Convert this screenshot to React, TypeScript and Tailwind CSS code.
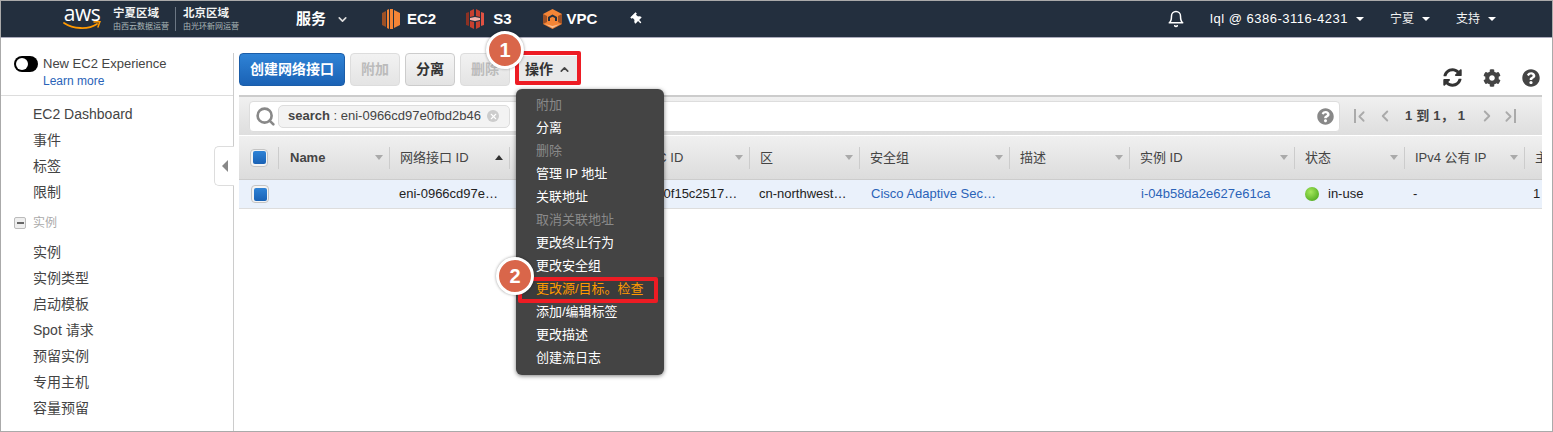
import { FaCog, FaQuestionCircle, FaSyncAlt, FaThumbtack } from "react-icons/fa";
import { FiBell } from "react-icons/fi";
import { ChevronDown, ChevronUp, ChevronLeft, ChevronRight, Search, X } from "lucide-react";

const font = "[font-family:'Liberation_Sans','Noto_Sans_CJK_SC',sans-serif]";

const columns = [
  { label: "Name", width: "w-[111px]", arrow: true, bold: true },
  { label: "网络接口 ID", width: "w-[120px]", arrow: false, up: true },
  { label: "", width: "w-[120px]", arrow: false },
  { label: "VPC ID", width: "w-[120px]", arrow: true },
  { label: "区", width: "w-[110px]", arrow: true },
  { label: "安全组", width: "w-[150px]", arrow: true },
  { label: "描述", width: "w-[120px]", arrow: true },
  { label: "实例 ID", width: "w-[165px]", arrow: true },
  { label: "状态", width: "w-[110px]", arrow: true },
  { label: "IPv4 公有 IP", width: "w-[120px]", arrow: true },
  { label: "主", width: "w-[60px]", arrow: false },
];

const menuItems = [
  { label: "附加", disabled: true },
  { label: "分离" },
  { label: "删除", disabled: true },
  { label: "管理 IP 地址" },
  { label: "关联地址" },
  { label: "取消关联地址", disabled: true },
  { label: "更改终止行为" },
  { label: "更改安全组" },
  { label: "更改源/目标。检查", active: true },
  { label: "添加/编辑标签" },
  { label: "更改描述" },
  { label: "创建流日志" },
];

const Caret = () => (
  <span className="inline-block w-0 h-0 border-x-[4px] border-x-transparent border-t-[4px] border-t-white" />
);

const SortArrow = ({ up }: { up?: boolean }) =>
  up ? (
    <span className="w-0 h-0 border-x-[4px] border-x-transparent border-b-[5px] border-b-[#333]" />
  ) : (
    <span className="w-0 h-0 border-x-[4px] border-x-transparent border-t-[5px] border-t-[#aaa]" />
  );

const CheckBox = () => (
  <span className="flex items-center justify-center w-[18px] h-[18px] rounded-[4px] border border-[#c4c4c4] bg-[#f4f4f4]">
    <span className="w-[13px] h-[13px] rounded-[2px] bg-gradient-to-b from-[#2f83d6] to-[#1a62b5]" />
  </span>
);

const Ec2Icon = () => (
  <svg width="18" height="20" viewBox="0 0 18 20">
    <path d="M0 4l4-2v16l-4-2z" fill="#9d5025" />
    <path d="M5 1l2-1v20l-2-1zM8 0h3v20H8zM12 1l6 3v12l-6 3z" fill="#f58536" />
  </svg>
);

const S3Icon = () => (
  <svg width="18" height="20" viewBox="0 0 18 20">
    <path d="M0 4l3-1v14l-3-1z" fill="#8c3123" />
    <path d="M4 2l4-2v7l-4 1zM4 12l4 1v7l-4-2zM10 0l4 2v6l-4-1zM10 13l4-1v6l-4 2z" fill="#c7402f" />
    <path d="M15 3l3 1v12l-3 1z" fill="#e05243" />
    <path d="M4 9l5-1 5 1v2l-5 1-5-1z" fill="#f2b0a9" />
  </svg>
);

const VpcIcon = () => (
  <svg width="19" height="20" viewBox="0 0 19 20">
    <path d="M0 5l9.5-5L19 5v10l-9.5 5L0 15z" fill="#f58536" />
    <path d="M0 5l4 2v6l-4 2zM19 5l-4 2v6l4 2z" fill="#9d5025" />
    <path d="M5 12V8l4.5-2.5L14 8v4h-2V9l-2.500-1.300L7 9v3z" fill="#232f3e" />
    <path d="M2 15l7.500 2 7.500-2-7.500 4z" fill="#fbbf93" />
  </svg>
);

const AwsLogo = () => (
  <div className="flex flex-col items-center w-[38px] h-[30px]">
    <span className="text-[21px] leading-[18px] text-white [font-family:'Open_Sans','Liberation_Sans',sans-serif] tracking-[-0.5px]">
      aws
    </span>
    <svg width="38" height="9" viewBox="0 0 38 9" className="-mt-[1px]">
      <path d="M1 2c9 6 24 7 33 1" fill="none" stroke="#f90" strokeWidth="1.800" strokeLinecap="round" />
      <path d="M31 1l6-.500-2 5.500" fill="none" stroke="#f90" strokeWidth="1.500" strokeLinecap="round" />
    </svg>
  </div>
);

const Region = ({ title, sub }: { title: string; sub: string }) => (
  <div className="flex flex-col leading-none pt-px">
    <span className="text-[11.500px] leading-[13px] font-bold text-[#f2f3f3]">{title}</span>
    <span className="text-[8px] leading-[12px] text-[#aab7b8] mt-[1px]">{sub}</span>
  </div>
);

const Btn = ({ label, disabled, className }: { label: string; disabled?: boolean; className?: string }) => (
  <button
    className={`flex items-center justify-center w-[50px] h-[33px] rounded-[4px] border text-[14px] font-bold bg-gradient-to-b ${
      disabled
        ? "border-[#ddd] from-[#f2f2f2] to-[#e4e4e4] text-[#bbb]"
        : "border-[#ccc] from-[#f6f6f6] to-[#e3e3e3] text-[#333]"
    } ${className ?? ""}`}
  >
    {label}
  </button>
);

const Header = () => (
  <header className="flex items-center h-[37px] bg-[#232f3e] border-b border-[#aab] pl-[62px] text-white shrink-0">
    <AwsLogo />
    <div className="ml-[12px]">
      <Region title="宁夏区域" sub="由西云数据运营" />
    </div>
    <span className="w-px h-[24px] bg-[#6b7683] ml-[6px] mr-[7px]" />
    <Region title="北京区域" sub="由光环新网运营" />
    <span className="ml-[57px] text-[15px] font-bold">服务</span>
    <ChevronDown size={13} strokeWidth={3} className="ml-[10px] text-[#ddd]" />
    <span className="ml-[33px] flex"><Ec2Icon /></span>
    <span className="ml-[7px] text-[15px] font-bold">EC2</span>
    <span className="ml-[30px] flex"><S3Icon /></span>
    <span className="ml-[9px] text-[15px] font-bold">S3</span>
    <span className="ml-[31px] flex"><VpcIcon /></span>
    <span className="ml-[5px] text-[15px] font-bold">VPC</span>
    <FaThumbtack size={12} className="ml-[34px] -rotate-45 text-white" />
    <div className="ml-auto flex items-center text-[13px] pr-[56px]">
      <FiBell size={18} className="mr-[25px]" />
      <span className="tracking-[0.5px]">lql @ 6386-3116-4231</span>
      <span className="ml-[8px] flex"><Caret /></span>
      <span className="ml-[26px] text-[12px] text-[#f4f4f4]">宁夏</span>
      <span className="ml-[8px] flex"><Caret /></span>
      <span className="ml-[26px] text-[12px] text-[#f4f4f4]">支持</span>
      <span className="ml-[8px] flex"><Caret /></span>
    </div>
  </header>
);

const NavItem = ({ label }: { label: string }) => (
  <div className="h-[26px] pl-[32px] flex items-center text-[14px] text-[#444]">{label}</div>
);

const Sidebar = () => (
  <aside className="relative w-[232px] shrink-0 pt-[15px]">
    <div className="pl-[13px] pt-px border-b border-[#ddd] h-[43px]">
      <div className="flex items-center h-[20px]">
        <span className="flex items-center w-[24px] h-[16px] rounded-full bg-black pl-[2px]">
          <span className="w-[12px] h-[12px] rounded-full bg-white" />
        </span>
        <span className="ml-[5px] text-[13px] text-[#444]">New EC2 Experience</span>
      </div>
      <div className="ml-[29px] text-[12px] leading-[15px] text-[#2a63b8]">Learn more</div>
    </div>
    <div className="pt-[5px]">
      {["EC2 Dashboard", "事件", "标签", "限制"].map((item) => (
        <NavItem key={item} label={item} />
      ))}
      <div className="flex items-center h-[26px] mt-[5px] pl-[13px]">
        <span className="flex items-center justify-center w-[12px] h-[12px] rounded-[2px] border border-[#bbb] bg-[#eee]">
          <span className="w-[7px] h-[2px] bg-[#666]" />
        </span>
        <span className="ml-[7px] text-[12px] text-[#aaa]">实例</span>
      </div>
      <div className="mt-[3px]">
        {["实例", "实例类型", "启动模板", "Spot 请求", "预留实例", "专用主机", "容量预留"].map((item) => (
          <NavItem key={item} label={item} />
        ))}
      </div>
    </div>
  </aside>
);

const Toolbar = () => (
  <div className="flex items-start h-[57px] pt-[15px]">
    <button className="flex items-center justify-center w-[106px] h-[33px] rounded-[4px] border border-[#1b5da8] bg-gradient-to-b from-[#2f83d6] to-[#1a62b5] text-white text-[14px] font-bold">
      创建网络接口
    </button>
    <Btn label="附加" disabled className="ml-[5px]" />
    <Btn label="分离" className="ml-[5px]" />
    <Btn label="删除" disabled className="ml-[5px]" />
    <button className="flex items-center justify-center ml-[8px] w-[60px] h-[27px] mt-[3px] bg-[#e9e9e9] text-[14px] font-bold text-[#333]">
      操作
      <ChevronUp size={13} strokeWidth={3} className="ml-[5px] text-[#444]" />
    </button>
    <div className="absolute right-[12px] top-[30px] flex items-center gap-[21px] text-[#444]">
      <FaSyncAlt size={19} className="text-[#333]" />
      <FaCog size={18} />
      <FaQuestionCircle size={18} />
    </div>
  </div>
);

const SearchBar = () => (
  <div className="flex items-center h-[40px] border-t-2 border-[#ccc] bg-gradient-to-b from-[#f0f0f0] to-[#dedede] pl-[10px]">
    <div className="flex items-center w-[1091px] h-[31px] rounded-[4px] border border-[#ddd] bg-white pl-[5px] pr-[5px]">
      <Search size={21} strokeWidth={3} className="text-[#888]" />
      <span className="flex items-center ml-[2px] w-[232px] h-[23px] rounded-[5px] border border-[#ddd] bg-[#f3f3f3] pl-[9px] text-[13px] text-[#444] whitespace-nowrap">
        <span className="font-bold">search</span>
        <span>&nbsp;: eni-0966cd97e0fbd2b46</span>
        <span className="ml-[6px] flex items-center justify-center w-[12px] h-[12px] rounded-full bg-[#ccc]">
          <X size={9} strokeWidth={3} className="text-white" />
        </span>
      </span>
      <FaQuestionCircle size={17} className="ml-auto text-[#888]" />
    </div>
    <div className="flex items-center ml-[14px] text-[#aaa]">
      <span className="w-[2px] h-[14px] bg-[#aaa]" />
      <ChevronLeft size={17} strokeWidth={2.500} className="-ml-[3px]" />
      <ChevronLeft size={18} strokeWidth={2.500} className="ml-[6px]" />
      <span className="ml-[11px] w-[63px] text-[13px] font-bold text-[#444] whitespace-nowrap tracking-[0.2px]">1 到 1， 1</span>
      <ChevronRight size={18} strokeWidth={2.500} className="ml-[10px]" />
      <ChevronRight size={17} strokeWidth={2.500} className="ml-[4px]" />
      <span className="w-[2px] h-[14px] bg-[#aaa] -ml-[3px]" />
    </div>
  </div>
);

const Table = () => (
  <div>
    <div className="flex h-[44px] mt-px border-b border-[#ccc] bg-gradient-to-b from-[#f0f0f0] to-[#dcdcdc] text-[13px] text-[#444]">
      <div className="flex items-center w-[39px] shrink-0 pl-[11px]">
        <CheckBox />
      </div>
      {columns.map((col) => (
        <div key={col.label} className={`flex items-center ${col.width} shrink-0`}>
          <span className="w-px h-[22px] bg-[#ccc]" />
          <span className={`whitespace-nowrap ${col.bold ? "ml-[11px] font-bold" : "ml-[10px]"}`}>{col.label}</span>
          {(col.arrow || col.up) && (
            <span className="ml-auto mr-[6px] flex">
              <SortArrow up={col.up} />
            </span>
          )}
        </div>
      ))}
    </div>
    <div className="flex h-[29px] border-b border-[#ddd] bg-[#eaf1fb] text-[13px] text-[#222] whitespace-nowrap">
      <div className="flex items-center w-[39px] shrink-0 pl-[12px]">
        <CheckBox />
      </div>
      <div className="w-[111px] shrink-0" />
      <div className="flex items-center w-[120px] shrink-0 pl-[10px]">eni-0966cd97e…</div>
      <div className="w-[120px] shrink-0" />
      <div className="flex items-center w-[120px] shrink-0 pl-[10px]">vpc-0f15c2517…</div>
      <div className="flex items-center w-[110px] shrink-0 pl-[10px]">cn-northwest…</div>
      <div className="flex items-center w-[150px] shrink-0 pl-[12px] text-[#2a63b8]">Cisco Adaptive Sec…</div>
      <div className="w-[120px] shrink-0" />
      <div className="flex items-center w-[165px] shrink-0 pl-[12px] text-[#2a63b8]">i-04b58da2e627e61ca</div>
      <div className="flex items-center w-[110px] shrink-0 pl-[11px]">
        <span className="w-[14px] h-[14px] rounded-full bg-[radial-gradient(circle_at_40%_35%,#a6e85c,#3d9e12)]" />
        <span className="ml-[9px]">in-use</span>
      </div>
      <div className="flex items-center w-[120px] shrink-0 pl-[9px]">-</div>
      <div className="flex items-center w-[17px] overflow-hidden pl-[9px]">1</div>
    </div>
  </div>
);

const ActionsMenu = () => (
  <div className="absolute left-[515px] top-[88px] w-[148px] pt-[4px] pb-[6px] rounded-[6px] bg-[#444] shadow-[0_1px_4px_rgba(0,0,0,0.5)] text-[13px] z-10">
    {menuItems.map((item) => (
      <div
        key={item.label}
        className={`flex items-center h-[23px] pl-[20px] whitespace-nowrap ${
          item.active ? "bg-[#3b3b3b] text-[#ff9900]" : item.disabled ? "text-[#8a8a8a]" : "text-white"
        }`}
      >
        {item.label}
      </div>
    ))}
  </div>
);

const Badge = ({ n, className }: { n: number; className: string }) => (
  <span
    className={`absolute z-30 flex items-center justify-center w-[38px] h-[38px] rounded-full border-[3px] border-white bg-[#d9664a] text-white text-[20px] font-bold shadow-[0_0_3px_rgba(0,0,0,0.4)] ${className}`}
  >
    {n}
  </span>
);

export default function App() {
  return (
    <div className={`relative w-[1553px] h-[432px] overflow-hidden bg-white border-x border-y border-[#aaa] flex flex-col ${font}`}>
      <Header />
      <div className="flex flex-1 min-h-0">
        <Sidebar />
        <main className="flex-1 min-w-0 relative ml-px pl-[5px] pr-[10px]">
          <span className="absolute left-[-1px] top-[15px] bottom-0 w-px bg-[#ccc]" />
          <Toolbar />
          <SearchBar />
          <div className="overflow-hidden">
            <Table />
          </div>
        </main>
      </div>

      {/* collapse tab */}
      <div className="absolute left-[213px] top-[145px] flex items-center justify-center w-[20px] h-[40px] rounded-l-[5px] border border-r-0 border-[#ddd] bg-white">
        <span className="w-0 h-0 border-y-[6px] border-y-transparent border-r-[6px] border-r-[#888]" />
      </div>

      <ActionsMenu />

      {/* red highlights */}
      <span className="absolute left-[514px] top-[50px] w-[66px] h-[34px] border-[4px] border-[#ed1c24] rounded-[2px] z-20" />
      <span className="absolute left-[517px] top-[276px] w-[140px] h-[26px] border-[4px] border-[#ed1c24] rounded-[2px] z-20" />
      <Badge n={1} className="left-[485px] top-[30px]" />
      <Badge n={2} className="left-[495px] top-[256px]" />
    </div>
  );
}
